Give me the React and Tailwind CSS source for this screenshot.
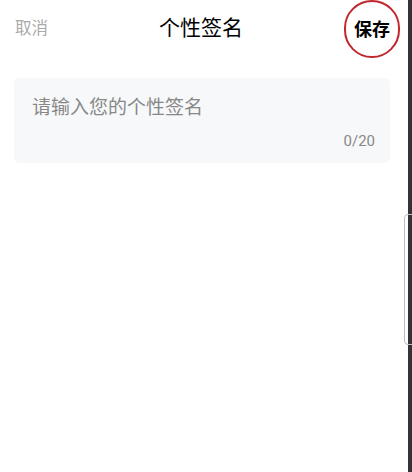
import React, { useState } from "react";

const App = () => {
  const [text, setText] = useState("");

  return (
    <div
      className="relative flex h-[472px] w-[412px] overflow-hidden bg-white"
      style={{ fontFamily: 'Roboto, "Noto Sans CJK SC", sans-serif' }}
    >
      <div className="flex-1">
        {/* Header */}
        <div className="relative flex h-[58px] items-center justify-between pl-[15px] pr-[18px]">
          <button className="text-[16.5px] text-[#aaaaaa]">取消</button>
          <h1 className="absolute left-[201px] -translate-x-1/2 text-[21px] text-black">个性签名</h1>
          <button className="relative text-[18px] font-bold text-black">
            保存
            <span className="absolute left-1/2 top-1/2 h-[58px] w-[56px] -translate-x-1/2 -translate-y-1/2 rounded-full border-2 border-[#c0282d]"></span>
          </button>
        </div>

        {/* Signature input */}
        <div className="ml-[14px] mr-[18px] mt-[20px] flex h-[85px] flex-col rounded-md bg-[#f7f8fa] pl-[18px] pr-[15px] pt-[16px] pb-[13px]">
          <textarea
            value={text}
            maxLength={20}
            onChange={(e) => setText(e.target.value)}
            placeholder="请输入您的个性签名"
            className="h-[28px] w-full resize-none bg-transparent text-[19px] leading-[27px] text-[#333] outline-none placeholder:text-[#888888]"
          />
          <div className="mt-auto text-right text-[15px] leading-[17px] text-[#888888]">{text.length}/20</div>
        </div>
      </div>

      {/* Right edge strip */}
      <div className="h-full w-[4px] bg-[#333333]"></div>
      <div className="absolute left-[404px] top-[214px] h-[131px] w-[10px] rounded-l-[4px] border border-[#bdbdbd]"></div>
    </div>
  );
};

export default App;
